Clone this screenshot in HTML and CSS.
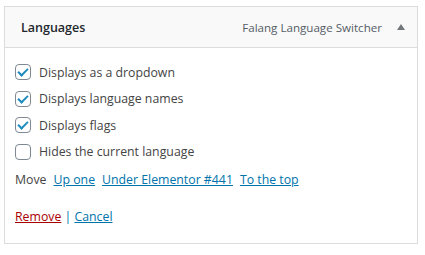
FILE: index.html
```html
<!DOCTYPE html>
<html lang="en">
<head>
    <meta charset="UTF-8">
    <title>Languages widget</title>
    <link rel="stylesheet" href="styles.css">
</head>
<body>
    <div class="widget">
        <div class="widget-top">
            <h3 class="widget-title">Languages</h3>
            <span class="widget-desc">Falang Language Switcher</span>
            <span class="toggle-arrow"></span>
        </div>
        <div class="widget-inside">
            <label class="check-row"><span class="checkbox checked"></span>Displays as a dropdown</label>
            <label class="check-row"><span class="checkbox checked"></span>Displays language names</label>
            <label class="check-row"><span class="checkbox checked"></span>Displays flags</label>
            <label class="check-row"><span class="checkbox"></span>Hides the current language</label>
            <div class="move-row">
                Move
                <a href="#">Up one</a>
                <a href="#">Under Elementor #441</a>
                <a href="#">To the top</a>
            </div>
            <div class="widget-control">
                <a href="#" class="remove">Remove</a> | <a href="#">Cancel</a>
            </div>
        </div>
    </div>
</body>
</html>
```

FILE: styles.css
```css
body {
    margin: 0;
    padding: 6px 0 0 4px;
    font-family: "Open Sans", "Noto Sans", sans-serif;
    font-size: 12.3px;
    color: #444;
    background: #fff;
}
.widget {
    width: 412px;
    border: 1px solid #dcdcde;
    background: #fff;
}
.widget-top {
    display: flex;
    align-items: center;
    height: 40px;
    padding: 0 12px 0 16px;
    background: #f9f9f9;
    border-bottom: 1px solid #dcdcde;
}
.widget-title {
    margin: 0;
    flex: 1;
    font-size: 12.5px;
    font-weight: 600;
    color: #23282d;
}
.widget-desc {
    font-size: 11.6px;
    color: #555d66;
}
.toggle-arrow {
    width: 0;
    height: 0;
    margin-left: 15px;
    border-left: 4px solid transparent;
    border-right: 4px solid transparent;
    border-bottom: 6px solid #72777c;
}
.widget-inside {
    padding: 11px 10px 18px 10px;
}
.check-row {
    display: flex;
    align-items: center;
    height: 26.5px;
    color: #444;
}
.checkbox {
    box-sizing: border-box;
    width: 16px;
    height: 16px;
    margin-right: 8px;
    border: 1px solid #7e8993;
    border-radius: 4px;
    background: #fff;
    position: relative;
}
.checkbox.checked::after {
    content: "";
    position: absolute;
    left: 4px;
    top: 1px;
    width: 4px;
    height: 8px;
    border-right: 2px solid #1e8cbe;
    border-bottom: 2px solid #1e8cbe;
    transform: rotate(45deg);
}
.move-row {
    display: flex;
    align-items: center;
    height: 28px;
    gap: 7px;
}
.move-row a,
.widget-control a {
    color: #0073aa;
}
.widget-control {
    margin-top: 15px;
    color: #0073aa;
}
.widget-control a.remove {
    color: #a00;
}
```
